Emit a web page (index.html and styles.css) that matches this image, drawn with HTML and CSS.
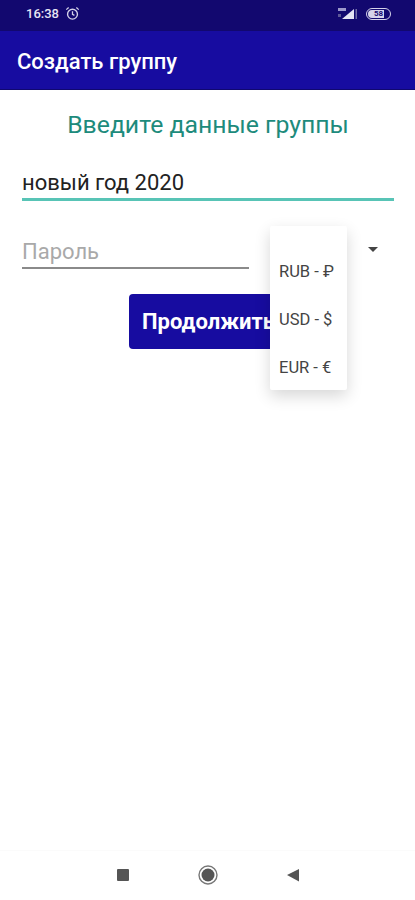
FILE: index.html
```html
<!DOCTYPE html>
<html lang="ru">
<head>
  <meta charset="UTF-8">
  <meta name="viewport" content="width=device-width, initial-scale=1.0">
  <title>Создать группу</title>
  <link rel="stylesheet" href="styles.css">
</head>
<body>
  <div class="phone">
    <div class="status-bar">
      <div class="status-left">
        <span class="status-time">16:38</span>
        <svg class="alarm-icon" width="15" height="15" viewBox="0 0 14 14">
          <circle cx="7" cy="7.6" r="4.6" fill="none" stroke="#d5d3ea" stroke-width="1.3"/>
          <path d="M7 5v2.8l1.8 1M1.2 3.4 3.4 1.4M12.8 3.4l-2.2-2" fill="none" stroke="#d5d3ea" stroke-width="1.2"/>
        </svg>
      </div>
      <div class="status-right">
        <svg class="signal-icon" width="22" height="14" viewBox="0 0 22 14">
          <path d="M2 1h8v3H2z" fill="#9c98cb"/>
          <path d="M2 7h3v3H2z" fill="#5d5897"/>
          <path d="M6 12 18 2v10z" fill="#e4e3f3"/>
          <path d="M19.500 2H21v10h-1.500z" fill="#6f6aa5"/>
        </svg>
        <span class="battery">58</span>
      </div>
    </div>

    <header class="app-bar">Создать группу</header>

    <main class="form">
      <h1 class="form-title">Введите данные группы</h1>
      <div class="name-field">новый год 2020</div>

      <div class="password-row">
        <div class="password-field">Пароль</div>
        <div class="spinner-arrow"></div>

        <!-- Currency dropdown is open over the row -->
        <ul class="currency-menu">
          <li>RUB - ₽</li>
          <li>USD - $</li>
          <li>EUR - €</li>
        </ul>
      </div>

      <button class="continue-button">Продолжить</button>
    </main>

    <nav class="nav-bar">
      <svg width="14" height="14" viewBox="0 0 14 14"><rect x="1" y="1" width="12" height="12" rx="1" fill="#555"/></svg>
      <svg width="20" height="20" viewBox="0 0 20 20">
        <circle cx="10" cy="10" r="9" fill="none" stroke="#777" stroke-width="1.4"/>
        <circle cx="10" cy="10" r="6.5" fill="#555"/>
      </svg>
      <svg width="14" height="14" viewBox="0 0 14 14"><path d="M13 1v12.500L1 7z" fill="#555"/></svg>
    </nav>
  </div>
</body>
</html>
```

FILE: styles.css
```css
* {
  margin: 0;
  padding: 0;
  box-sizing: border-box;
}

body {
  font-family: Roboto, 'Liberation Sans', sans-serif;
  background: #ffffff;
  overflow: hidden;
}

.phone {
  width: 415px;
  height: 900px;
  display: flex;
  flex-direction: column;
}

.status-bar {
  height: 31px;
  flex-shrink: 0;
  background: #12086f;
  color: #e6e5f4;
  display: flex;
  justify-content: space-between;
  align-items: center;
  padding: 0 24px 4px 26px;
}

.status-left,
.status-right {
  display: flex;
  align-items: center;
}

.status-left {
  gap: 6px;
}

.status-right {
  gap: 8px;
}

.status-time {
  font-size: 13px;
  font-weight: 500;
}

.battery {
  width: 25px;
  height: 12px;
  border: 1px solid #d5d3ea;
  border-radius: 6px;
  background: linear-gradient(90deg, #d5d3ea 72%, transparent 72%);
  background-clip: content-box;
  padding: 1px;
  color: #12086f;
  font-size: 8px;
  font-weight: 700;
  line-height: 8px;
  text-align: center;
}

.app-bar {
  height: 59px;
  flex-shrink: 0;
  background: #170ca0;
  color: #ffffff;
  font-size: 22px;
  font-weight: 500;
  line-height: 61px;
  padding-left: 17px;
  border-bottom: 1px solid #10086f;
}

.form {
  flex-grow: 1;
  padding: 0 21px 0 22px;
  display: flex;
  flex-direction: column;
}

.form-title {
  margin-top: 21px;
  font-size: 24.800px;
  font-weight: 400;
  line-height: 28px;
  color: #1d8b7c;
  text-align: center;
}

.name-field {
  margin-top: 24px;
  height: 38px;
  font-size: 22px;
  line-height: 40px;
  color: #222222;
  border-bottom: 3px solid #58c4b6;
}

.password-row {
  position: relative;
  margin-top: 34px;
  height: 34px;
}

.password-field {
  width: 227px;
  height: 34px;
  font-size: 22px;
  line-height: 34px;
  color: #a9a9a9;
  border-bottom: 2px solid #8a8a8a;
}

.spinner-arrow {
  position: absolute;
  left: 346px;
  top: 12px;
  border-left: 5px solid transparent;
  border-right: 5px solid transparent;
  border-top: 5px solid #444444;
}

.currency-menu {
  position: absolute;
  z-index: 2;
  left: 248px;
  top: -9px;
  width: 77px;
  height: 164px;
  padding-top: 22px;
  list-style: none;
  background: #ffffff;
  border-radius: 2px;
  box-shadow: 0 6px 16px rgba(0, 0, 0, 0.16);
}

.currency-menu li {
  height: 48px;
  padding-left: 9px;
  font-size: 16.500px;
  line-height: 48px;
  color: #444444;
  white-space: nowrap;
}

.continue-button {
  align-self: flex-start;
  margin: 25px 0 0 107px;
  width: 156px;
  height: 55px;
  background: #170ca0;
  color: #ffffff;
  border: none;
  border-radius: 4px;
  font-family: inherit;
  font-size: 22px;
  font-weight: 700;
  text-align: left;
  padding-left: 13px;
  white-space: nowrap;
}

.nav-bar {
  height: 50px;
  flex-shrink: 0;
  display: flex;
  justify-content: center;
  align-items: center;
  gap: 68px;
  padding-bottom: 1px;
  border-top: 1px solid #fbfbfb;
}
```
